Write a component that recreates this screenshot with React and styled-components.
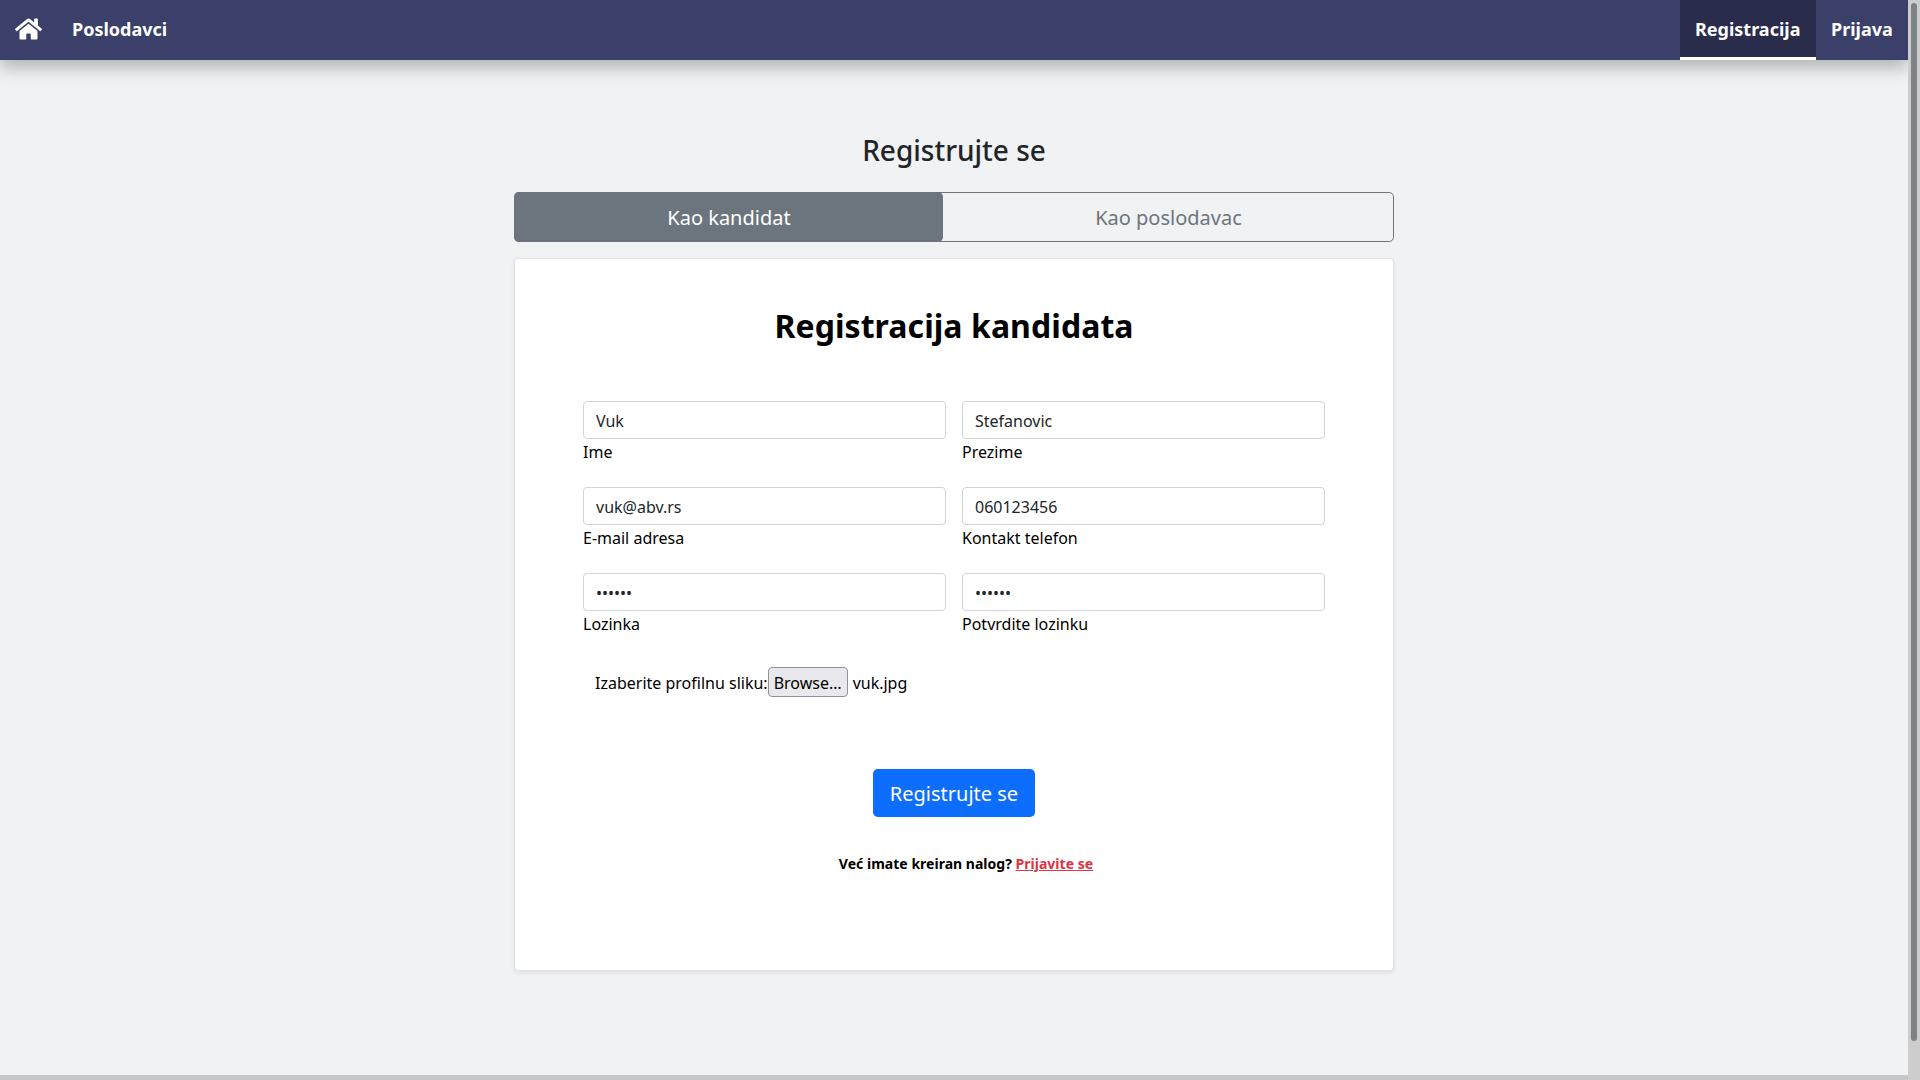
import React from "react";
import styled, { createGlobalStyle } from "styled-components";
import { FaHome } from "react-icons/fa";

const GlobalStyle = createGlobalStyle`
  *, *::before, *::after { box-sizing: border-box; }
  html, body { margin: 0; height: 1080px; overflow: hidden; }
  body { font-family: "Noto Sans", sans-serif; font-size: 16px; line-height: 24px; color: #000; background: #f0f2f4; }
`;

const Screen = styled.div`
  display: grid;
  grid-template-columns: 1908px 12px;
  height: 1080px;
`;
const Page = styled.div`
  display: flex;
  flex-direction: column;
  height: 1080px;
  overflow: hidden;
  background: #f0f2f4;
`;
const Track = styled.div`
  background: #cdcdcd;
  padding: 3px;
`;
const Thumb = styled.div`
  width: 6px;
  height: 1038px;
  border-radius: 3px;
  background: #7d8282;
`;
const Navbar = styled.nav`
  display: flex;
  flex: 0 0 60px;
  background: #3a406a;
  box-shadow: 0 8px 16px rgba(0, 0, 0, 0.26);
`;
const NavItem = styled.a`
  display: flex;
  align-items: center;
  flex: 0 0 ${(p) => (p.$width ? `${p.$width}px` : "auto")};
  height: 60px;
  padding: 0 0 2px 15px;
  margin-right: ${(p) => (p.$width ? "0" : "15px")};
  margin-left: ${(p) => (p.$push ? "auto" : "0")};
  color: #fff;
  font-size: 18px;
  font-weight: 700;
  text-decoration: none;
  background: ${(p) => (p.$active ? "#292c4b" : "transparent")};
  box-shadow: ${(p) => (p.$active ? "inset 0 -3px 0 #fff" : "none")};
`;
const HomeIcon = styled(FaHome)`
  width: 27px;
  height: 24px;
`;
const Main = styled.main`
  display: flex;
  flex-direction: column;
  flex: 1;
  width: 880px;
  margin: 0 auto;
  padding-top: 73px;
`;
const Title = styled.h1`
  margin: 0 0 25px;
  font-size: 28px;
  line-height: 34px;
  font-weight: 500;
  color: #212529;
  text-align: center;
`;
const Tabs = styled.div`
  display: flex;
  height: 50px;
  border: 1px solid #6c757d;
  border-radius: 4.8px;
`;
const Tab = styled.button`
  flex: ${(p) => (p.$active ? "0 0 429px" : "1")};
  height: 50px;
  margin: ${(p) => (p.$active ? "-1px 0 0 -1px" : "-1px -1px 0 0")};
  padding: ${(p) => (p.$active ? "2px 0 0 1px" : "2px 0 0")};
  border: 0;
  border-radius: 4.8px;
  font: 400 20px/30px "Noto Sans", sans-serif;
  color: ${(p) => (p.$active ? "#fff" : "#6c757d")};
  background: ${(p) => (p.$active ? "#6c757d" : "transparent")};
`;
const Card = styled.section`
  display: flex;
  flex-direction: column;
  height: 713px;
  margin-top: 16px;
  padding: 47px 68px 0;
  background: #fff;
  border: 1px solid #dee2e6;
  border-radius: 4px;
  box-shadow: 0 2px 4px rgba(0, 0, 0, 0.075);
`;
const CardTitle = styled.h2`
  margin: 0 0 55px;
  font-size: 32px;
  line-height: 40px;
  font-weight: 700;
  letter-spacing: 0.06px;
  text-align: center;
`;
const Fields = styled.div`
  display: grid;
  grid-template-columns: 363px 363px;
  gap: 23px 16px;
`;
const Field = styled.label`
  display: flex;
  flex-direction: column;
`;
const Input = styled.input`
  width: 100%;
  height: 38px;
  margin-bottom: 1px;
  padding: 7px 12px 5px;
  border: 1px solid #ced4da;
  border-radius: 4px;
  font: 400 16px/24px "Noto Sans", sans-serif;
  color: #212529;
  background: #fff;
  outline: none;
`;
const FileRow = styled.div`
  display: flex;
  align-items: center;
  height: 30px;
  margin: 31px 0 0 12px;
`;
const FileText = styled.span`
  padding-top: 2px;
`;
const Browse = styled.button`
  width: 80px;
  height: 30px;
  margin-right: 5px;
  padding: 2px 0 0;
  border: 1px solid #8f8f9d;
  border-radius: 4px;
  font: 400 16px/24px "Noto Sans", sans-serif;
  color: #000;
  background: #e9e9ed;
`;
const Submit = styled.button`
  align-self: center;
  width: 162px;
  height: 48px;
  margin-top: 72px;
  padding: 2px 0 0;
  border: 0;
  border-radius: 4.8px;
  font: 400 20px/30px "Noto Sans", sans-serif;
  color: #fff;
  background: #0d6efd;
`;
const Note = styled.p`
  margin: 35px 0 0 24px;
  font-size: 14px;
  line-height: 24px;
  font-weight: 700;
  letter-spacing: 0.02px;
  text-align: center;
`;
const Link = styled.a`
  color: #dc3545;
  text-decoration: underline;
`;
const Footer = styled.footer`
  flex: 0 0 5px;
  background: #c6c7c9;
`;

const fields = [
  { label: "Ime", value: "Vuk" },
  { label: "Prezime", value: "Stefanovic" },
  { label: "E-mail adresa", value: "vuk@abv.rs" },
  { label: "Kontakt telefon", value: "060123456" },
  { label: "Lozinka", value: "••••••" },
  { label: "Potvrdite lozinku", value: "••••••" },
];

export default function App() {
  return (
    <Screen>
      <GlobalStyle />
      <Page>
        <Navbar>
          <NavItem><HomeIcon /></NavItem>
          <NavItem>Poslodavci</NavItem>
          <NavItem $push $active $width={136}>Registracija</NavItem>
          <NavItem $width={92}>Prijava</NavItem>
        </Navbar>
        <Main>
          <Title>Registrujte se</Title>
          <Tabs>
            <Tab $active>Kao kandidat</Tab>
            <Tab>Kao poslodavac</Tab>
          </Tabs>
          <Card>
            <CardTitle>Registracija kandidata</CardTitle>
            <Fields>
              {fields.map((f) => (
                <Field key={f.label}>
                  <Input type="text" defaultValue={f.value} />
                  {f.label}
                </Field>
              ))}
            </Fields>
            <FileRow>
              <FileText>Izaberite profilnu sliku:</FileText>
              <Browse>Browse…</Browse>
              <FileText>vuk.jpg</FileText>
            </FileRow>
            <Submit>Registrujte se</Submit>
            <Note>
              Već imate kreiran nalog? <Link>Prijavite se</Link>
            </Note>
          </Card>
        </Main>
        <Footer />
      </Page>
      <Track><Thumb /></Track>
    </Screen>
  );
}
